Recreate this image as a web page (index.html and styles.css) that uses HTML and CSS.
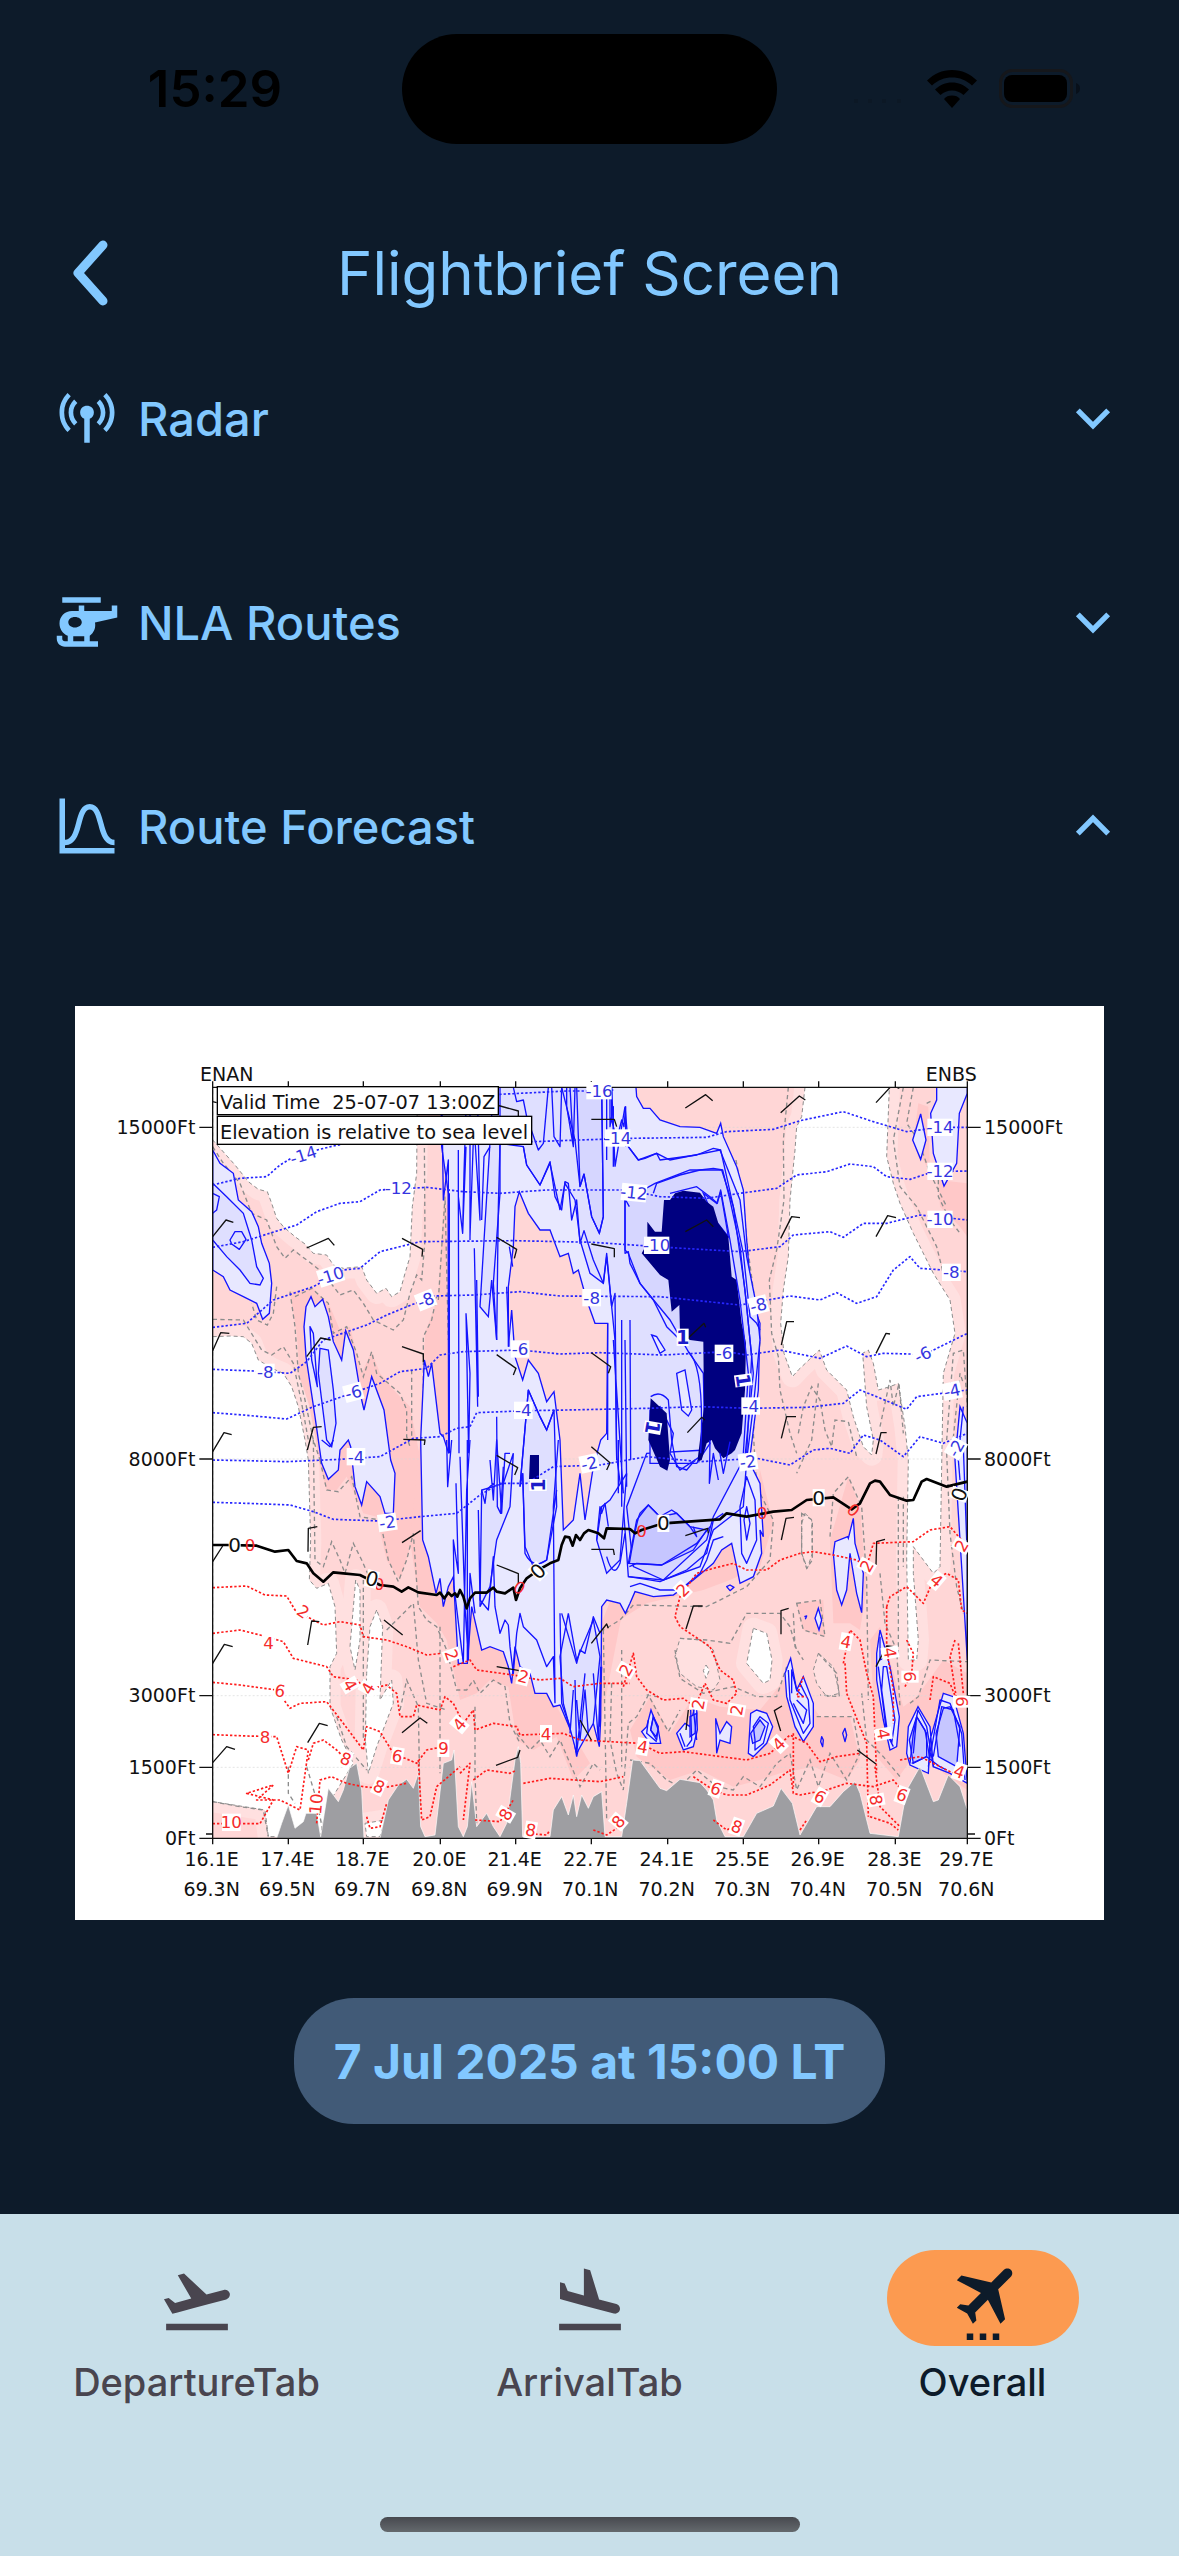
FILE: index.html
```
<!DOCTYPE html>
<html lang="en">

<head>
    <meta charset="UTF-8">
    <meta name="viewport" content="width=device-width, initial-scale=1.0">
    <title>Flightbrief Screen</title>
    <link rel="stylesheet" href="styles.css">
</head>

<body>
    <!-- Status bar -->
    <div class="status-bar">
        <span class="time">15:29</span>
        <div class="island"></div>
        <div class="status-icons">
            <svg class="signal" viewBox="0 0 54 12" aria-hidden="true"><path d="M3 4h4v4H3zM17 4h4v4h-4zM31 4h4v4h-4zM46 4h4v4h-4z"/></svg>
            <svg class="wifi" viewBox="0 0 50 38" aria-hidden="true">
                <path d="M25 0C35 0 43 4 50 10.500L45 15.500C39 10 32.500 7.500 25 7.500S11 10 5 15.500L0 10.500C7 4 15 0 25 0z"/>
                <path d="M25 12.500C31.500 12.500 37 15 42 19.500L36.500 25C33 22 29.500 20.500 25 20.500S17 22 13.500 25L8 19.500C13 15 18.500 12.500 25 12.500z"/>
                <path d="M25 25.500C28.500 25.500 31 26.500 33 29L25 38L17 29C19 26.500 21.500 25.500 25 25.500z"/>
            </svg>
            <svg class="battery" viewBox="0 0 82 40" aria-hidden="true">
                <rect x="1.500" y="1.500" width="71" height="36" rx="12" fill="none" stroke="#15171b" stroke-width="3"/>
                <rect x="5" y="6" width="63" height="27" rx="8"/>
                <path d="M77 14C80 15 81 17 81 19.500S80 24 77 25z" fill="#08101a"/>
            </svg>
        </div>
    </div>

    <header class="header">
        <button class="back" aria-label="Back">
            <svg viewBox="0 0 40 68"><path d="M33 6L8 34L33 62"/></svg>
        </button>
        <h1>Flightbrief Screen</h1>
    </header>

    <!-- Main Content -->
    <main class="content">
        <div class="sections">
            <button class="section" aria-expanded="false">
                <svg class="icon" viewBox="0 0 24 24"><path d="M12 7.500C12.690 7.500 13.270 7.730 13.760 8.200S14.500 9.270 14.500 10C14.500 11.050 14 11.810 13 12.280V21H11V12.280C10 11.810 9.500 11.050 9.500 10C9.500 9.270 9.760 8.670 10.240 8.200S11.310 7.500 12 7.500M16.690 5.300C17.940 6.550 18.610 8.110 18.700 10C18.700 11.800 18.030 13.380 16.690 14.720L15.500 13.500C16.500 12.590 17 11.420 17 10C17 8.670 16.500 7.500 15.500 6.500L16.690 5.300M6.090 4.080C4.500 5.670 3.700 7.640 3.700 10S4.500 14.300 6.090 15.890L4.920 17.110C3 15.080 2 12.700 2 10C2 7.300 3 4.940 4.920 2.910L6.090 4.080M19.080 2.910C21 4.940 22 7.300 22 10C22 12.800 21 15.170 19.080 17.110L17.910 15.890C19.500 14.300 20.300 12.330 20.300 10S19.500 5.670 17.910 4.080L19.080 2.910M7.310 5.300L8.500 6.500C7.500 7.420 7 8.580 7 10C7 11.330 7.500 12.500 8.500 13.500L7.310 14.720C5.970 13.380 5.300 11.800 5.300 10C5.300 8.200 5.970 6.640 7.310 5.300Z"/></svg>
                <span class="label">Radar</span>
                <svg class="chevron" viewBox="0 0 36 24"><path d="M4 5L18 19L32 5"/></svg>
            </button>
            <button class="section" aria-expanded="false">
                <svg class="icon" viewBox="0 0 24 24"><path fill-rule="evenodd" d="M3 3H17V5H3V3M9 8V6H11V8H21V6H23V10.400L14.900 12.200C15.300 14 14.500 16 13 17V19H16V21H4C2.300 21 1 19.700 1 18V17H3V18C3 18.600 3.400 19 4 19H5V17C3.200 16.200 2 14.500 2 12.500C2 10 4 8 6.500 8H9M7.600 10.200C6.200 10.200 5.200 11 5.200 12.100S6.200 14 7.600 14S10.100 13.200 10.100 12.100S9 10.200 7.600 10.200M7 17.200V19H11V17.200H7Z"/></svg>
                <span class="label">NLA Routes</span>
                <svg class="chevron" viewBox="0 0 36 24"><path d="M4 5L18 19L32 5"/></svg>
            </button>
            <button class="section" aria-expanded="true">
                <svg class="icon" viewBox="0 0 24 24"><path d="M9.960 11.310C10.820 8.100 11.500 6 13 6C14.500 6 15.180 8.100 16.040 11.310C17 14.920 18.100 19 22 19V17C19.800 17 19 14.540 17.970 10.800C17.080 7.460 16.150 4 13 4C9.850 4 8.920 7.460 8.030 10.800C7.030 14.540 6.200 17 4 17V2H2V22H22V20H4V19C7.900 19 9 14.920 9.960 11.310Z"/></svg>
                <span class="label">Route Forecast</span>
                <svg class="chevron" viewBox="0 0 36 24"><path d="M4 19L18 5L32 19"/></svg>
            </button>
        </div>

        <!-- Vertical cross section ENAN - ENBS -->
        <svg class="forecast" viewBox="-315 -102 3087 2742" role="img" aria-label="Route forecast ENAN to ENBS">
            <defs>
                <clipPath id="plot"><path d="M98 142H2362V2395H98z"/></clipPath>
                <g id="dry-air">
                    <path d="M98 142H712L710 400 697 500 690 650 675 700 660 755 635 770 618 745 590 760 560 720 545 680 490 685 460 675 440 645 400 640 375 612 345 590 310 560 290 535 275 490 262 455 235 448 205 425 165 375 125 330 98 300z"/>
                    <path d="M1875 142L1865 230 1850 260 1845 330 1830 480 1825 650 1810 750 1802 850 1812 940 1837 1010 1855 990 1918 930 1940 990 2000 1050 2020 1130 2050 1220 2075 1245 2080 1200 2060 1100 2048 940 2065 930 2080 970 2095 1050 2130 1040 2155 1030 2175 1160 2185 1260 2180 1550 2185 1860 2210 1860 2215 1800 2200 1600 2200 1520 2260 1600 2280 1580 2285 1280 2290 1000 2325 880 2310 780 2260 700 2200 580 2160 490 2140 430 2120 350 2128 142z"/>
                    <path d="M98 890L150 888 190 890 215 910 235 960 275 985 310 1000 335 1040 355 1100 375 1200 385 1260 392 1500 388 1620 410 1645 445 1630 465 1700 470 1840 450 1880 450 2000 485 2100 520 2170 440 2300 420 2390 265 2390 255 2310 98 2285z"/>
                    <path d="M527 1620L510 1820 525 1890 540 1800 540 1650zM590 1710L570 1760 560 1900 556 2100 565 2200 590 2120 640 1990 635 1920 600 1980 608 1760zM555 2350L615 2340 600 2390 560 2390z"/>
                    <path d="M1720 1765L1760 1780 1776 1860 1770 1920 1750 1930 1700 1870z"/>
                </g>
            </defs>
            <g clip-path="url(#plot)">
                <path class="mid" d="M98 142H2362V2395H98z"/>

                <!-- humid patches -->
                <g class="humid">
                    <path d="M330 755L400 745 450 800 480 870 510 860 545 1000 575 935 600 1000 650 1060 690 1100 720 1250 700 1490 660 1620 620 1560 590 1430 550 1420 500 1310 470 1350 440 1350 410 1240 385 1150 360 1020 350 880z"/>
                    <path d="M735 880L775 770 790 500 830 480 900 1000 1040 1600 1130 2000 1230 2170 1180 2220 1130 2090 1060 2130 1010 2100 985 1940 930 1920 890 1960 840 1980 800 1800 770 1750 720 1700 690 1500 720 1200z"/>
                    <path d="M1140 2060L1260 2060 1330 1700 1270 1770 1400 1690 1570 1650 1650 1620 1740 1580 1780 1450 1740 1290 1720 1480 1650 1480 1520 1600 1300 1660z"/>
                    <path d="M1350 2070L1410 1970 1470 2080 1540 1970 1620 2000 1740 2010 1830 1900 1920 2030 2010 2030 2040 2160 2000 2220 1900 2180 1800 2200 1740 2220 1660 2240 1560 2190 1470 2220 1370 2150z"/>
                    <path d="M1950 1500L2005 1310 2040 1400 2060 1650 2040 1770 2010 1750 1960 1750z"/>
                    <path d="M1850 1690L1930 1680 1935 1790 1870 1770z"/>
                    <path d="M2070 1800L2100 1760 2170 2000 2210 1970 2290 1860 2362 1900V2250L2290 2200 2220 2120 2150 2220 2090 2150z"/>
                    <path d="M2275 420L2362 430V590L2340 560 2280 500zM2215 190L2245 200 2250 400 2200 300z"/>
                </g>

                <!-- dry air -->
                <use href="#dry-air" class="dry-edge"/>
                <use href="#dry-air" class="dry"/>
                <g class="light">
                    <path d="M1500 1795L1560 1800 1600 1830 1620 1920 1600 1950 1550 1940 1500 1900 1485 1850z"/>
                    <path d="M1915 1840L1960 1880 1978 1960 1940 1970 1910 1930 1900 1890z"/>
                    <path d="M1875 1420L1895 1440 1897 1540 1882 1585 1865 1540 1865 1450z"/>
                </g>
                <path class="dry" d="M1578 1875L1588 1890 1578 1915 1570 1892z"/>

                <!-- humidity outlines -->
                <path class="grey" d="M98 320L130 370 180 430 215 520 260 540 290 620 315 655 340 630 400 675 430 700 480 765 520 750 550 790 580 840 610 855 640 870 670 840 690 760 710 705 725 720 735 600 732 142M98 838L190 840 245 930 275 945 310 920 340 970 365 1090 385 1200M290 740L280 820 262 855 230 840 215 790M330 755L345 860 355 1000 375 1080 400 1200 420 1260M345 770L395 745 445 790 460 880 500 860 530 940 550 1010 575 935 590 1000 625 1030 660 1060 680 1110 680 1190 690 1220M695 990L695 1190M775 780L795 470 805 900M730 1090V890L755 840 770 770"/>
                <path class="grey" d="M400 1200L405 1560 430 1580 455 1505 480 1560 495 1600 520 1510 545 1560 580 1640M420 1260L440 1350 475 1355 515 1310 540 1430 600 1440 625 1560 655 1625 680 1560 700 1480 715 1700 740 1740 770 1760 800 1830 830 1950 860 1950 880 1920 900 1960 940 1920 975 1940 990 2050 1020 2110M620 1770L680 1710 700 1690 715 1860 740 1990 800 2010M660 2010L680 1920 715 2000 720 2300M780 1760V2200M550 1620V2100M470 2030L500 2120 560 2190M98 2285L180 2300 250 2310 265 2390M325 2180V2260L345 2290M380 2180L410 2280 430 2380M885 2000V2200L890 2350M1010 2080L1050 2130 1080 2100 1110 2150 1140 2100 1170 2170 1200 2240 1240 2170 1260 2190"/>
                <path class="grey" d="M1825 142L1810 300 1812 480 1790 630 1768 720 1775 880 1795 950 1800 1050 1830 1180 1850 1240M1668 360L1690 480 1700 600 1740 900 1720 1180 1730 1340 1780 1440 1770 1560 1700 1640 1580 1700 1360 1695 1320 1740 1270 1770M1855 1180L1870 1100 1895 1040 1920 1080 1935 1170 1955 1220 1965 1140 2005 1145 2030 1250M1915 1030L1895 1200 1850 1300M2170 142L2140 300 2160 440 2210 500 2270 620 2290 700M2200 142L2180 250 2215 300 2250 400 2300 500M2240 190L2260 180M2275 420V470L2310 540 2340 580M2300 1200L2320 940 2350 930 2362 1100M2315 1240L2340 1000 2350 1030M2100 1160L2130 1020 2140 1100 2157 1030 2170 1180"/>
                <path class="grey" d="M1950 1490L1960 1360 2005 1310 2045 1400 2060 1620 2065 1980M2100 1600L2115 1750 2150 1830 2160 2000M2155 1370V1850M2170 1370V1580M2300 1240L2310 1480 2330 1640 2350 1720M1850 1690L1920 1680 1935 1790 1870 1770zM1840 1720L1845 1820 1870 1860M1500 1795L1580 1800 1650 1810 1700 1720 1800 1720 1830 1760 1850 1830M1485 1830L1500 1915 1570 1960 1660 1940 1730 1970 1790 1970 1820 1880M1915 1840L1970 1900 1978 1970 1920 1965M1270 1770L1280 2340M1295 1930L1290 2100 1310 2200 1330 2250 1345 2050 1370 2030 1405 1965 1440 2030 1465 2075 1500 2010M1325 1830V2180M1350 2160L1410 2170 1460 2220 1500 2240 1550 2190 1610 2240 1660 2250 1690 2210 1740 2240 1790 2170 1830 2140 1850 2250 1890 2160 1915 2240 1950 2140 2000 2220 2045 2130M1910 2030L2020 2030 2040 2140M2045 1960L2060 2100 2110 2150 2160 2210M2190 1990L2215 1970 2250 1860 2362 1865M1400 1965L1430 1970M1865 1420L1897 1440 1897 1560 1880 1585 1865 1540z"/>
                <path class="grid" d="M98 262H2362M98 1257H2362M98 1967H2362M98 2182H2362"/>

                <!-- cloud cover -->
                <g class="cloud-1">
                    <path fill-rule="evenodd" d="M783 142L785 320 805 460 806 1240 790 1190 780 1180 755 970 745 1010 733 960 722 1200 728 1500 745 1550 768 1660 780 1615 790 1700 805 1640 820 1610 835 1870 862 1870 875 1700 905 1830 930 1820 970 1835 985 1880 995 1930 1005 1820 1020 1880 1050 1900 1065 1960 1100 1960 1120 2000 1140 1995 1180 2090 1190 2150 1210 2060 1240 2050 1258 2120 1262 2040 1265 1700 1280 1680 1320 1690 1336 1720 1350 1690 1365 1655 1420 1670 1480 1665 1540 1620 1600 1570 1625 1530 1655 1510 1670 1580 1680 1630 1720 1610 1745 1540 1740 1470 1750 1490 1740 1330 1720 1290 1710 1250 1735 1050 1740 850 1715 780 1700 600 1690 450 1670 380 1630 290 1622 250 1610 280 1560 262 1500 260 1440 240 1410 205 1390 205 1370 170 1368 142zM1018 455L1005 500 1000 620 985 740 985 920 995 810 1005 950 1028 1020 1045 960 1075 1000 1100 1085 1122 1055 1140 1200 1150 1470 1180 1440 1200 1300 1215 1440 1240 1280 1262 1200 1280 1180 1283 850 1245 850 1220 780 1195 690 1180 700 1165 640 1140 650 1110 570 1080 570 1045 520z"/>
                    <path d="M98 330L120 370 160 400 175 480 215 515 235 560 245 610 268 670 275 730 268 820 248 838 230 790 190 770 150 750 130 710 98 690z"/>
                    <path d="M378 950L372 860 378 800 393 770 405 800 428 778 445 830 460 905 485 960 497 872 520 930 545 1080 552 1110 575 1010 612 1110 632 1260 645 1300 640 1420 615 1420 600 1370 560 1325 545 1395 525 1340 512 1220 505 1200 480 1230 475 1290 445 1318 425 1270 405 1130z"/>
                    <path d="M2270 142V180L2252 220 2260 340 2292 438 2330 370 2338 220 2362 160V142zM2222 222L2198 300 2222 358 2238 300z"/>
                    <path d="M2005 1495L2003 1490 1965 1505 1960 1540 1970 1650 1985 1695 2000 1650 2010 1540 2030 1660 2045 1718 2050 1600 2025 1510 2020 1435z"/>
                    <path d="M2100 1770L2090 1840 2090 1920 2110 2040 2130 2130 2150 2120 2158 2030 2130 1880z"/>
                    <path d="M1832 1855L1815 1900 1820 1970 1845 2060 1870 2105 1900 2060 1900 1990 1870 1910 1850 1950z"/>
                    <path d="M1712 2020L1705 2140 1720 2150 1760 2110 1778 2060 1760 2020 1730 2010zM1607 2035L1610 2140 1620 2100 1650 2110 1655 2060 1640 2045 1620 2080zM1543 2005L1530 2060 1515 2050 1490 2080 1510 2130 1540 2120 1552 2070 1550 2005zM1413 2010L1400 2060 1385 2075 1410 2110 1442 2110 1435 2070zM1915 1705L1905 1735 1917 1770 1925 1740z"/>
                    <path d="M2214 2000L2185 2060 2180 2140 2190 2175 2245 2200 2250 2100 2290 1960 2320 1970 2350 2080 2362 2230 2310 2200 2260 2180 2250 2060z"/>
                    <path d="M2340 1100L2325 1260 2340 1500 2362 1860V1150z"/>
                </g>
                <g class="cloud-2">
                    <path d="M940 142H1295L1305 380 1335 200 1345 320 1375 360 1430 340 1470 360 1620 330 1680 480 1700 650 1730 800 1740 900 1720 1100 1700 1260 1690 1400 1600 1470 1560 1580 1450 1620 1345 1610 1330 1400 1310 1250 1305 900 1280 650 1270 730 1230 700 1200 600 1185 480 1155 430 1140 510 1110 370 1080 435 1040 375 1030 320 960 310 955 500 950 900 935 720 925 830 900 800z"/>
                    <path d="M98 430L140 470 190 520 215 600 230 680 250 715 240 735 210 730 180 690 140 650 98 600z"/>
                    <path d="M420 925L445 930 460 1050 468 1150 455 1220 440 1200 415 1000z"/>
                    <path d="M1045 1050L1080 1130 1100 1170 1122 1110 1130 1400 1100 1560 1060 1580 1035 1520 1028 1300 1020 1340z"/>
                    <path d="M905 1350L900 1700 930 1640 950 1500 990 1400 1000 1240 970 1330 940 1340zM1265 1400L1250 1500 1280 1600 1320 1560 1340 1300 1290 1380zM1165 1720L1190 1860 1240 1740 1260 1850 1240 2050 1190 2140 1150 1990 1140 1850z"/>
                </g>
                <g class="cloud-3">
                    <path d="M1145 142H1265L1270 530 1258 580 1235 530 1212 402 1200 440 1185 300zM1335 480L1425 430 1530 390 1625 390 1660 500 1695 750 1720 1000 1695 1250 1600 1430 1580 1500 1450 1620 1360 1580 1340 1400 1400 1240 1575 1230 1570 1000 1525 935 1470 840 1380 730 1345 640 1335 630z"/>
                    <path d="M1550 1270L1590 1210 1570 1170 1560 1250 1500 1290 1470 1240 1480 1180 1440 1100 1410 1110 1410 1270z"/>
                </g>
                <path class="cloud-4" d="M1345 1570L1370 1440 1405 1395 1440 1430 1490 1420 1530 1460 1580 1470 1540 1530 1445 1575zM1570 460L1610 490 1622 455 1645 590 1605 540z"/>
                <path class="cloud-4" d="M2210 2030L2188 2100 2200 2170 2240 2150 2240 2080zM2290 2005L2268 2080 2275 2150 2330 2180 2340 2060 2310 2000zM1712 2080L1718 2110 1740 2100 1755 2060 1740 2040zM1420 2030L1412 2070 1428 2090 1435 2070zM1530 2030L1530 2090 1545 2080 1550 2020z"/>
                <path class="cloud-1" d="M1490 1000L1515 990 1525 1050 1535 1110 1525 1128 1505 1110zM1415 885L1430 890 1455 930 1440 940z"/>
                <path class="cloud-5" d="M1452 480L1470 480 1485 460 1510 452 1560 458 1580 485 1600 500 1615 550 1645 590 1655 710 1670 720 1685 850 1698 910 1695 1050 1685 1180 1665 1230 1655 1240 1630 1255 1605 1225 1595 1200 1580 1210 1565 1260 1552 1265 1560 1200 1572 1100 1570 905 1530 900 1500 880 1498 795 1475 815 1465 720 1440 705 1385 640 1402 610 1402 545 1425 575 1445 575zM1412 1075L1460 1120 1470 1260 1475 1240 1462 1292 1440 1280 1405 1200 1408 1140zM1050 1245H1077V1318H1047z"/>

                <!-- cloud outlines -->
                <path class="blue" d="M785 142L790 480 805 360 806 1240M808 460V1240M835 440L837 1240M835 330V470L848 580 858 320M848 570L852 400 860 142M870 142V600M880 300L870 590M892 142L900 540 885 300M905 540L912 350 930 320M960 142V460L940 730 950 900M858 820L866 1240M866 1240L870 1000 858 820M883 625L893 1100M890 720L895 1070M950 1130L952 1400 962 1420 970 1280M980 740L987 920M988 620L998 680M1000 142L1010 185 1030 180 1040 230 1075 330 1090 310 1105 142M1115 142L1122 290 1140 320 1145 142M1160 142L1160 200 1180 320 1185 142M1170 142L1180 320M1190 142L1200 440 1212 402 1235 530 1258 580 1270 530 1265 142M1030 320L1040 375 1080 435 1110 365 1125 470 1145 510 1155 425 1165 430 1175 540 1190 480 1200 610 1212 572 1240 660 1270 730 1280 640 1295 800 1305 760 1310 1260M1280 142V360M1290 142V260L1300 200V380M1295 142V240L1310 300 1325 240 1332 260 1337 200V320M1283 850V1200M1325 840V1400M1350 840L1352 1260M1335 900L1340 1340M1315 1200V1360M1300 900L1330 1360M1337 480L1348 500M1335 480V640L1345 635 1350 670 1380 730 1420 780 1460 860 1480 880 1500 900M1525 935Q1575 980 1562 1240M1345 320L1375 360 1395 355 1430 340 1440 360 1550 345 1600 325 1622 330 1660 500 1690 640 1710 830 1730 850 1740 870M1420 460L1430 430 1500 405 1560 390 1600 385 1628 390 1650 480 1680 620 1700 800 1715 950 1700 1240M1470 460L1550 440 1590 470 1612 490 1622 450 1650 600 1680 780 1705 1000 1690 1240M1412 1070Q1440 1050 1465 1080L1475 1200 1490 1280 1520 1290 1545 1260"/>
                <path class="blue" d="M150 600L165 575 185 575 198 598 178 628 155 612zM390 860L395 960 412 1040 400 880zM98 460L118 470 110 510 98 520M425 1200L450 1220 460 1200M800 1200L803 1340 815 1200M828 1330L835 1600 820 1500 822 1640 850 1870 860 1350 870 1200M840 1250L855 1700 865 1860 870 1600 885 1720M862 1200V1860M905 1350L915 1390 920 1350 940 1330M930 1260L940 1380 950 1200 965 1420 975 1240 990 1240M895 1410L900 1680 925 1710 940 1550 945 1700 960 1780 975 1740 985 1755 990 1820 1000 1900 1010 1780 1020 1720 1030 1760 1070 1800 1100 1880 1120 1850 1125 1990M1125 1990L1120 1400 1135 1200M1028 1300L1035 1540Q1060 1590 1100 1560L1130 1350M1020 1340L1045 1050 1080 1130 1100 1170 1122 1110M1140 1720L1145 1990 1170 2060M1145 1720L1190 1870 1200 1830 1215 1840 1240 1730 1260 1780M1185 1920L1190 2140 1215 1900M1180 1950L1170 2080M1190 1980L1200 2100 1215 1950 1225 2080M1240 1900L1255 2100 1262 1880M1265 1880L1258 2060M1250 1500L1260 1400 1265 1420 1275 1390 1285 1460M1280 1550Q1300 1620 1320 1570L1335 1480M1348 1570Q1370 1440 1380 1420L1405 1395 1440 1430 1475 1410 1490 1420 1530 1460 1550 1490 1540 1460M1445 1575L1370 1570 1348 1580M1445 1575L1550 1510 1590 1460M1345 1610L1380 1615 1440 1625 1520 1590 1580 1540 1600 1440 1630 1420M1350 1640L1380 1630 1440 1650 1500 1650 1560 1600 1580 1560 1600 1500 1630 1490M1700 1310L1680 1400 1685 1540 1700 1570 1730 1500 1725 1380zM1700 1400L1692 1440 1700 1500 1710 1450zM1650 1205L1630 1300 1620 1240M1590 1200L1588 1330 1600 1240 1615 1320"/>
                <path class="blue" d="M1640 1640L1650 1635 1662 1642 1650 1652zM1873 1730L1880 1728 1876 1738M1925 2090L1930 2100 1928 2120 1922 2105zM1995 2065L2000 2085 1995 2105 1988 2080zM1825 1890L1830 1980 1870 2080 1890 2050 1885 1980 1860 1930M1835 1960V1890L1850 1950 1870 1970M1840 1990L1870 2050 1880 2010 1850 1980M1725 2100L1720 2060 1740 2030 1765 2050 1750 2110 1725 2130zM2110 1880L2105 1950 2120 2060 2135 2110 2145 2040 2120 1880zM2095 1880L2120 2080 2140 2120M2100 1790L2100 1860 2120 1850M2190 2170L2200 2080 2214 2010 2240 2060 2260 2180M2195 2170L2240 2150 2280 2180 2300 2190M2200 2140L2210 2030 2235 2070 2250 2160M2245 2180L2280 1980 2310 1990 2345 2080 2355 2220M2260 2150L2285 2000 2320 2010 2340 2120M2340 1320L2335 1260 2350 1220 2360 1500M2350 1100L2340 1200M1420 2030L1412 2070 1430 2100 1435 2060zM1532 2010L1535 2100 1520 2120M1540 2005L1550 2100M1405 2040L1400 2080 1430 2105M1500 2080L1515 2120"/>

                <path class="terrain" d="M290 2395L305 2350 325 2295 345 2365 370 2345 378 2320 410 2320 422 2390 445 2245 475 2285 490 2250 508 2185 530 2170 545 2250 552 2395H600L625 2280 655 2235 680 2218 700 2245 715 2200 722 2360 735 2390 765 2385 790 2170 815 2160 822 2130 835 2360 850 2390 862 2360 875 2225 890 2360 920 2320 940 2360 960 2390 980 2350 1005 2160 1015 2120 1022 2170 1028 2390 1110 2390 1120 2310 1145 2270 1165 2325 1180 2265 1190 2330 1205 2265 1225 2305 1240 2270 1265 2255 1275 2390 1325 2390 1340 2290 1358 2160 1380 2162 1440 2245 1460 2252 1500 2218 1560 2228 1580 2250 1600 2280 1610 2340 1635 2390 1690 2390 1730 2320 1780 2298 1803 2245 1837 2290 1860 2385 1910 2300 1950 2300 1990 2255 2025 2225 2040 2260 2070 2380 2155 2390 2180 2250 2220 2180 2260 2285 2275 2280 2305 2205 2340 2240 2362 2310V2395z"/>

                <!-- isotherms below zero -->
                <path class="cold" d="M98 435L180 415 260 410 300 375 350 345 460 318 600 290M750 170L960 163 1160 153 1230 153 1300 150"/>
                <path class="cold" d="M960 305L1060 305 1200 300 1350 295 1580 292 1640 275 1780 268 1860 242 1990 215 2080 245 2180 275 2280 262H2362"/>
                <path class="cold" d="M98 622L190 605 300 570 350 555 410 515 480 490 540 485 600 450 740 442 850 455 960 460 1100 450 1340 450 1440 470 1580 475 1680 460 1790 445 1850 405 1940 395 2010 372 2080 380 2120 410 2190 418 2260 395 2362 393"/>
                <path class="cold" d="M98 862L200 850 280 780 400 740 490 690 540 685 600 635 720 605 1000 602 1240 607 1460 622 1680 635 1800 620 1840 585 1950 575 1990 592 2050 550 2120 550 2220 525 2362 540"/>
                <path class="cold" d="M98 988L220 993 330 1000 380 965 430 900 560 855 620 825 760 768 880 765 1020 755 1140 768 1440 770 1680 795 1830 768 1920 780 1970 758 2030 790 2090 770 2140 690 2190 650 2220 685 2362 695"/>
                <path class="cold" d="M98 1118L190 1125 320 1137 400 1100 500 1065 600 1030 660 995 740 985 780 945 850 935 1020 930 1140 942 1260 938 1450 945 1640 935 1700 945 1800 930 1920 955 2000 918 2060 950 2110 940 2190 942 2240 940 2362 880"/>
                <path class="cold" d="M98 1260L200 1262 320 1265 480 1258 600 1250 700 1195 780 1190 830 1165 870 1160 890 1118 1040 1112 1160 1110 1400 1105 1560 1100 1710 1105 1880 1102 1990 1090 2040 1050 2090 1070 2180 1108 2210 1070 2362 1050"/>
                <path class="cold" d="M98 1387L200 1390 330 1395 400 1415 460 1438 600 1443 720 1430 830 1420 900 1365 960 1330 1040 1330 1120 1280 1260 1275 1400 1250 1560 1265 1730 1255 1830 1275 1900 1230 1950 1225 2010 1240 2050 1185 2100 1200 2170 1250 2220 1190 2290 1210 2362 1180"/>

                <!-- isotherms above zero -->
                <path class="warm" d="M98 1643L200 1638 255 1665 320 1668 345 1710 400 1740 430 1755 480 1745 540 1755 550 1790 620 1800 680 1820 740 1845 830 1835M98 1780L180 1770 240 1785 310 1805 340 1855 440 1880 460 1910 530 1920 560 1950 620 1935 650 1960 660 2030 700 2030 710 1995 780 2010 795 1970 820 1990 850 2050 880 2010 885 2070 940 2050 1010 2060 1020 2085 1150 2080 1200 2100 1290 2105 1380 2110 1440 2140 1510 2135 1700 2160 1770 2140 1830 2085 1880 2110 1920 2165 1970 2150 2040 2140M98 1927L180 1935 290 1950 330 2005 360 1990 440 1985 490 2050 550 2130 560 2060 600 2075 640 2140 710 2170 740 2130 790 2120M98 2084L200 2088 290 2090 325 2200 350 2120 385 2130M385 2160L400 2110 430 2100 470 2130 510 2170M98 2351H240L280 2280 200 2260 280 2235 230 2280 300 2280 360 2310 385 2130M410 2350L420 2220 455 2210 500 2230 550 2240 600 2245 680 2230M560 2330L570 2365 600 2360 620 2290M715 2160L725 2340 750 2330 770 2240 840 2180M840 2200L870 2170 850 2340M880 2220L920 2190 990 2200 1010 2190M885 2340L960 2345 1000 2280M1030 2230L1110 2215 1260 2225 1330 2210M1040 2380L1100 2385 1110 2370M820 1880L870 1860 890 1890 1000 1905 1080 1920 1140 1915 1180 1940 1260 1930 1350 1930"/>
                <path class="warm" d="M1330 1940L1360 1840 1370 1910 1400 1950 1450 1980 1510 1975 1530 1990M1550 1990L1575 1930 1600 1980 1640 1990 1670 1960 1660 1920 1620 1890 1590 1820 1500 1760 1485 1730 1500 1670 1550 1600 1600 1585 1660 1570 1700 1590 1760 1590 1800 1560 1860 1540 1900 1535 1960 1545 2030 1560 2060 1580 2080 1510 2200 1505 2250 1470 2310 1460 2362 1520M1540 2210L1600 2250 1640 2265 1700 2265 1770 2235 1830 2190 1840 2260 1860 2265 1940 2250 2000 2230 2080 2240 2140 2220 2165 2250M2120 1700L2130 1670 2180 1640 2230 1690 2260 1620 2300 1600 2335 1620 2345 1710 2362 1720M1990 1870L2010 1770 2040 1800 2060 1900 2080 1970 2090 2200M2120 1700V1830L2140 1950 2140 2050M1995 1870L2000 1960 2060 2110 2065 2330M2180 1800L2200 1840 2195 1900 2175 1940M2325 1800L2310 1850 2330 1980M2335 1810L2350 1960M2250 1980L2260 1910 2310 1930 2330 1980M2160 2160L2220 2150 2320 2200M2070 2330L2130 2350 2155 2370M2085 2180L2100 2300 2160 2360M1600 2340L1640 2370 1660 2360M1870 1910L1850 1970 1880 1970M1240 2370L1280 2385 1310 2365M1840 2080V2240M1860 2370L1880 2340"/>

                <!-- freezing level -->
                <path class="freezing" d="M98 1515L140 1515 230 1517 285 1535 325 1530 350 1563 380 1570 400 1600 430 1625 460 1597 490 1600 540 1605 600 1635 640 1640 665 1655 685 1642 715 1657 770 1665 780 1658 793 1675 805 1658 815 1668 825 1660 832 1670 840 1650 850 1670 860 1705 870 1675 885 1658 920 1658 940 1643 950 1655 975 1660 1000 1643 1008 1680 1020 1645 1040 1615 1075 1590 1110 1570 1135 1560 1145 1515 1155 1490 1168 1492 1178 1517 1188 1485 1200 1500 1212 1480 1225 1470 1255 1480 1272 1495 1280 1465 1350 1467 1365 1480 1385 1470 1450 1450 1620 1438 1640 1420 1700 1430 1780 1415 1835 1410 1880 1380 1960 1372 2015 1408 2040 1390 2070 1330 2085 1322 2100 1325 2130 1365 2180 1382 2200 1380 2225 1325 2240 1317 2300 1340 2362 1325"/>

                <!-- wind barbs -->
                <path class="barb" d="M98 185L110 188M98 590L138 540 160 547M98 932L122 878 148 880M98 1235L132 1178 155 1184M98 1565L128 1518M98 1870L133 1813 158 1820M98 2168L140 2120 165 2128M380 624L445 595 463 616M380 950L422 894 452 900M382 1230L400 1162 425 1160M384 1535L385 1465 412 1460M383 1815L395 1743 418 1745M383 2108L418 2050 443 2057M666 595L728 628 726 650M666 920L730 942V965M670 1198L735 1200 733 1215M666 1508L722 1472M612 1740L668 1785M666 2078L720 2034 742 2050M950 195L1015 213V230M950 592L1010 628 1003 655M950 944L1008 985 1000 1005M950 1246L1013 1283 1004 1305M950 1575L1015 1601V1630M950 1880L1018 1892V1910M948 2176L1013 2152 1020 2130M1234 238H1303L1310 260M1234 612L1303 626V652M1234 938L1292 980 1285 1000M1234 1220L1290 1268 1280 1290M1234 1528H1300L1303 1545M1234 1810L1280 1752 1285 1765M1234 2100L1200 2040"/>
                <path class="barb" d="M1516 204L1577 164 1598 182M1516 575L1580 540 1600 560M1518 900L1572 850 1577 862M1522 1178L1565 1132 1575 1140M1516 1487L1583 1465 1585 1480M1518 1767L1540 1698H1568M1518 2070L1525 2010M1802 218L1858 168 1876 180M1802 595L1835 530 1860 533M1804 915L1820 845H1842M1804 1195L1820 1130H1848M1804 1500L1818 1435 1842 1432M1803 1783V1712L1826 1705M1802 2073L1783 2012 1806 1998M2088 188L2136 136 2158 145M2088 590L2123 527 2148 533M2088 940L2118 880 2130 882M2088 1242L2103 1178H2120M2088 1575L2090 1505 2115 1498M2088 1880L2120 1818 2143 1820M2088 2172L2032 2130"/>
            </g>

            <!-- axes -->
            <path class="axis" d="M98 142H2362V2395H98zM58 262H98M58 1257H98M58 1967H98M58 2182H98M58 2395H98M78 2382H98M2362 262H2402M2362 1257H2402M2362 1967H2402M2362 2182H2402M2362 2395H2402M2362 2382H2385M98 2395V2413M325 2395V2413M550 2395V2413M781 2395V2413M1007 2395V2413M1234 2395V2413M1463 2395V2413M1690 2395V2413M1916 2395V2413M2146 2395V2413M2362 2395V2413M98 142V124M325 142V124M550 142V124M781 142V124M1007 142V124M1234 142V124M1463 142V124M1690 142V124M1916 142V124M2146 142V124M2362 142V124"/>
            <g id="labels"></g>
            <g id="ticks"></g>
            <g class="box">
                <rect x="112" y="140" width="843" height="84"/>
                <rect x="112" y="229" width="943" height="84"/>
                <text x="120" y="208" xml:space="preserve">Valid Time  25-07-07 13:00Z</text>
                <text x="120" y="297">Elevation is relative to sea level</text>
            </g>
        </svg>

        <button class="date">7 Jul 2025 at 15:00 LT</button>
    </main>

    <!-- Bottom tabs -->
    <nav class="tabs">
        <a class="tab" href="#departure">
            <span class="pill"><svg viewBox="0 0 24 24"><path d="M2.500 19H21.500V21H2.500V19M22.070 9.640C21.860 8.840 21.030 8.360 20.230 8.580L14.920 10L8 3.570L6.090 4.080L10.230 11.250L5.260 12.580L3.290 11.040L1.840 11.430L3.660 14.590L4.430 15.920L6.030 15.500L11.340 14.070L15.690 12.910L21 11.500C21.810 11.260 22.280 10.440 22.070 9.640Z"/></svg></span>
            <span>DepartureTab</span>
        </a>
        <a class="tab" href="#arrival">
            <span class="pill"><svg viewBox="0 0 24 24"><path d="M2.500 19H21.500V21H2.500V19M9.680 13.270L14.030 14.430L19.340 15.850C20.140 16.060 20.960 15.590 21.180 14.790C21.390 14 20.920 13.170 20.120 12.950L14.810 11.530L12.050 2.500L10.120 2V10.280L5.150 8.950L4.220 6.630L2.770 6.240V11.410L4.370 11.840L9.680 13.270Z"/></svg></span>
            <span>ArrivalTab</span>
        </a>
        <a class="tab active" href="#overall" aria-current="page">
            <span class="pill"><svg viewBox="0 0 24 24"><path d="M7 22H9V24H7V22M11 22H13V24H11V22M15 22H17V24H15V22M20.560 2.410C21.150 3 21.150 3.950 20.560 4.530L16.670 8.420L18.790 17.610L17.380 19.030L13.500 11.600L9.600 15.500L9.960 17.970L8.890 19.030L7.130 15.850L3.940 14.080L5 13L7.500 13.370L11.370 9.500L3.940 5.590L5.360 4.180L14.550 6.300L18.440 2.410C19 1.830 20 1.830 20.560 2.410Z"/></svg></span>
            <span>Overall</span>
        </a>
        <div class="home-indicator"></div>
    </nav>

    <script src="script.js"></script>
</body>

</html>
```

FILE: styles.css
```
* {
    box-sizing: border-box;
}

body {
    font-family: Inter, "Liberation Sans", sans-serif;
    background: #0d1b2a;
    color: #82c8ff;
    margin: 0;
    min-height: 100vh;
    display: flex;
    flex-direction: column;
}

button {
    background: none;
    border: none;
    padding: 0;
    color: inherit;
    font: inherit;
    cursor: pointer;
}

/* Status bar */
.status-bar {
    display: grid;
    grid-template-columns: 1fr 375px 1fr;
    align-items: center;
    height: 177px;
    color: #000;
}

.time {
    font-size: 51px;
    font-weight: 600;
    text-align: center;
    padding-left: 28px;
}

.island {
    height: 110px;
    border-radius: 55px;
    background: #000;
}

.status-icons {
    display: flex;
    align-items: center;
    justify-content: flex-end;
    gap: 22px;
    padding-right: 98px;
}

.signal {
    width: 54px;
    height: 12px;
    margin-top: 24px;
    fill: #0c1825;
}

.wifi {
    width: 50px;
    height: 38px;
}

.battery {
    width: 82px;
    height: 40px;
}

/* Header */
.header {
    display: grid;
    grid-template-columns: 110px 1fr 110px;
    align-items: center;
    height: 196px;
    padding: 0 36px 4px;
}

.back svg {
    display: block;
    width: 40px;
    height: 68px;
    margin: 0 auto 0 34px;
    fill: none;
    stroke: currentColor;
    stroke-width: 9;
    stroke-linecap: round;
    stroke-linejoin: round;
}

h1 {
    margin: 0;
    text-align: center;
    font-size: 60px;
    font-weight: 400;
}

/* Sections */
.content {
    flex: 1;
    display: flex;
    flex-direction: column;
    align-items: center;
    padding: 0 75px;
}

.sections {
    align-self: stretch;
    display: flex;
    flex-direction: column;
    gap: 114px;
    margin: 0 -21px 135px;
}

.section {
    display: flex;
    align-items: center;
    height: 90px;
    gap: 18px;
    padding-right: 12px;
    font-size: 47px;
    font-weight: 500;
    text-align: left;
}

.section .icon {
    width: 66px;
    height: 66px;
    fill: currentColor;
}

.label {
    flex: 1;
}

.chevron {
    width: 40px;
    height: 26px;
    fill: none;
    stroke: currentColor;
    stroke-width: 5;
}

/* Forecast chart */
.forecast {
    display: block;
    width: 100%;
    background: #fff;
    font-family: "DejaVu Sans", sans-serif;
    font-size: 57px;
    fill: #111;
}

.mid { fill: #ffd6d6; }
.humid { fill: #ffc8c8; }

.dry-edge {
    fill: none;
    stroke: #ffe0e0;
    stroke-width: 64;
    stroke-linejoin: round;
}

.dry {
    fill: #fff;
    stroke: #8c8c8c;
    stroke-width: 3;
    stroke-dasharray: 12 9;
}

.light {
    fill: #ffe0e0;
    stroke: #8c8c8c;
    stroke-width: 3;
    stroke-dasharray: 12 9;
}

.grey {
    fill: none;
    stroke: #8c8c8c;
    stroke-width: 4;
    stroke-dasharray: 13 10;
}

.grid {
    stroke: #d8d8d8;
    stroke-width: 2;
    stroke-dasharray: 6 6;
}

.cloud-1, .cloud-2, .cloud-3, .cloud-4 {
    stroke: #1414ff;
    stroke-width: 4;
}

.cloud-1 { fill: #e8e8ff; }
.cloud-2 { fill: #dfdfff; }
.cloud-3 { fill: #d6d6ff; }
.cloud-4 { fill: #c6c6ff; }
.cloud-5 { fill: #000080; }

.blue, .cold, .warm, .freezing, .barb, .axis {
    fill: none;
    stroke: #1414ff;
    stroke-width: 4;
    stroke-linejoin: round;
}

.cold {
    stroke: #2626ff;
    stroke-width: 5;
    stroke-dasharray: 7 6;
}

.warm {
    stroke: #ff1a1a;
    stroke-width: 5;
    stroke-dasharray: 7 6;
}

.freezing {
    stroke: #000;
    stroke-width: 8;
}

.barb {
    stroke: #111;
    stroke-width: 4;
}

.axis {
    stroke: #111;
    stroke-width: 4;
}

.terrain {
    fill: #9e9ea2;
    stroke: #fff;
    stroke-width: 2;
}

.mark {
    text-anchor: middle;
    font-size: 50px;
}

.mark rect { fill: #fff; }
.mark.neg { fill: #3535e0; }
.mark.pos { fill: #f52c2c; }
.mark.sat { fill: #1c1cc8; font-size: 58px; font-weight: bold; }
.mark.zero { font-size: 60px; }

.mid-anchor { text-anchor: middle; }
.end-anchor { text-anchor: end; }

.box {
    font-size: 58px;
}

.box rect {
    fill: #fff;
    stroke: #000;
    stroke-width: 4;
}

/* Date */
.date {
    margin-top: 78px;
    height: 126px;
    padding: 0 40px;
    border-radius: 60px;
    background: #415a77;
    font-size: 48px;
    font-weight: 700;
}

/* Bottom tabs */
.tabs {
    display: grid;
    grid-template-columns: repeat(3, 1fr);
    height: 342px;
    padding-top: 36px;
    background: #c8dfe9;
}

.tab {
    display: flex;
    flex-direction: column;
    align-items: center;
    gap: 12px;
    color: #49454f;
    font-size: 38px;
    font-weight: 500;
    line-height: 48px;
    text-decoration: none;
}

.pill {
    display: flex;
    align-items: center;
    justify-content: center;
    width: 192px;
    height: 96px;
    padding-top: 6px;
    border-radius: 48px;
}

.pill svg {
    width: 78px;
    height: 78px;
    fill: currentColor;
}

.tab.active {
    color: #0d1b2a;
}

.active .pill {
    background: #fc9a50;
}

.home-indicator {
    grid-column: 1 / -1;
    align-self: end;
    justify-self: center;
    width: 420px;
    height: 15px;
    margin-bottom: 24px;
    border-radius: 8px;
    background: linear-gradient(#47494f, #64696d);
}
```

FILE: script.js
```
// [x, y, angle, text] for every contour label
const marks = {
    neg: [
        [370, 345, -18, '-14'], [655, 445, 0, '-12'], [452, 707, -18, '-10'], [737, 780, -22, '-8'],
        [256, 997, 0, '-8'], [520, 1057, -15, '-6'], [528, 1250, 0, '-4'], [622, 1447, -8, '-2'],
        [1020, 927, 0, '-6'], [1030, 1111, 0, '-4'], [1235, 773, 0, '-8'], [1228, 1270, -12, '-2'],
        [1257, 152, 0, '-16'], [1313, 294, 0, '-14'], [1362, 458, 6, '-12'], [1430, 616, 0, '-10'],
        [1735, 795, -15, '-8'], [1632, 940, 0, '-6'], [1712, 1098, 0, '-4'], [1704, 1265, -8, '-2'],
        [2280, 262, 0, '-14'], [2280, 394, 0, '-12'], [2280, 538, 0, '-10'], [2314, 697, 0, '-8'],
        [2228, 943, -25, '-6'], [2316, 1052, -12, '-4'], [2328, 1225, -60, '-2']
    ],
    pos: [
        [210, 1516, 0, '0'], [597, 1633, 0, '0'], [1018, 1643, 30, '0'], [1385, 1473, 0, '0'],
        [1746, 1420, 0, '0'], [2020, 1410, 40, '0'], [370, 1715, 35, '2'], [266, 1808, 0, '4'],
        [300, 1952, 10, '6'], [255, 2091, 0, '8'], [510, 1935, 60, '4'], [564, 1945, -60, '4'],
        [815, 1845, 70, '2'], [1030, 1910, 15, '2'], [838, 2053, -50, '4'], [1098, 2081, 0, '4'],
        [497, 2157, 20, '8'], [652, 2148, 10, '6'], [790, 2125, 180, '6'], [597, 2240, 25, '8'],
        [408, 2292, -85, '10'], [154, 2347, 0, '10'], [977, 2323, -60, '8'], [1052, 2370, 10, '8'],
        [1508, 1650, -45, '2'], [1338, 1890, -60, '2'], [1555, 1993, -80, '2'], [1670, 2010, -80, '2'],
        [1388, 2120, 10, '4'], [1796, 2112, -45, '4'], [1608, 2246, 20, '6'], [1920, 2270, 30, '6'],
        [1315, 2345, -50, '8'], [1670, 2360, 20, '8'], [2060, 1578, -60, '2'], [2270, 1622, 40, '4'],
        [1998, 1805, 10, '4'], [2130, 1838, 80, '4'], [2190, 1910, 90, '6'], [2110, 2082, 80, '4'],
        [2344, 1517, -60, '2'], [2345, 1985, 90, '6'], [2338, 2195, 20, '4'], [2088, 2280, 80, '8'],
        [2166, 2265, 20, '6']
    ],
    sat: [
        [1074, 1335, -90, '1'], [1508, 892, 0, '1'], [1690, 1021, 82, '1'], [1418, 1163, 100, '1']
    ],
    zero: [
        [164, 1516, 0, '0'], [576, 1617, 15, '0'], [1074, 1594, -45, '0'],
        [1450, 1450, 0, '0'], [1916, 1373, 0, '0'], [2338, 1363, -70, '0']
    ]
};

const svgNs = 'http://www.w3.org/2000/svg';

function add(parent, name, attrs, text) {
    const node = document.createElementNS(svgNs, name);
    Object.keys(attrs).forEach(key => node.setAttribute(key, attrs[key]));
    if (text) {
        node.textContent = text;
    }
    parent.appendChild(node);
    return node;
}

const labels = document.getElementById('labels');
Object.keys(marks).forEach(kind => {
    marks[kind].forEach(([x, y, angle, text]) => {
        const g = add(labels, 'g', {
            class: 'mark ' + kind,
            transform: `translate(${x} ${y}) rotate(${angle})`
        });
        // the red zeros sit on the black line without a box
        if (kind !== 'pos' || text !== '0') {
            const w = { 1: 36, 2: 56, 3: 76 }[text.length];
            add(g, 'rect', { x: -w / 2, y: -26, width: w, height: 52 });
        }
        add(g, 'text', { x: 0, y: kind === 'zero' || kind === 'sat' ? 21 : 18 }, text);
    });
});

const ticks = document.getElementById('ticks');
const positions = [98, 325, 550, 781, 1007, 1234, 1463, 1690, 1916, 2146, 2362];
const east = ['16.1E', '17.4E', '18.7E', '20.0E', '21.4E', '22.7E', '24.1E', '25.5E', '26.9E', '28.3E', '29.7E'];
const north = ['69.3N', '69.5N', '69.7N', '69.8N', '69.9N', '70.1N', '70.2N', '70.3N', '70.4N', '70.5N', '70.6N'];
positions.forEach((x, i) => {
    add(ticks, 'text', { class: 'mid-anchor', x: x - 3, y: 2479 }, east[i]);
    add(ticks, 'text', { class: 'mid-anchor', x: x - 3, y: 2568 }, north[i]);
});

const heights = { '15000Ft': 262, '8000Ft': 1257, '3000Ft': 1967, '1500Ft': 2182, '0Ft': 2395 };
Object.keys(heights).forEach(text => {
    add(ticks, 'text', { class: 'end-anchor', x: 46, y: heights[text] + 20 }, text);
    add(ticks, 'text', { x: 2412, y: heights[text] + 20 }, text);
});

add(ticks, 'text', { class: 'mid-anchor', x: 140, y: 122 }, 'ENAN');
add(ticks, 'text', { class: 'mid-anchor', x: 2314, y: 122 }, 'ENBS');
```
